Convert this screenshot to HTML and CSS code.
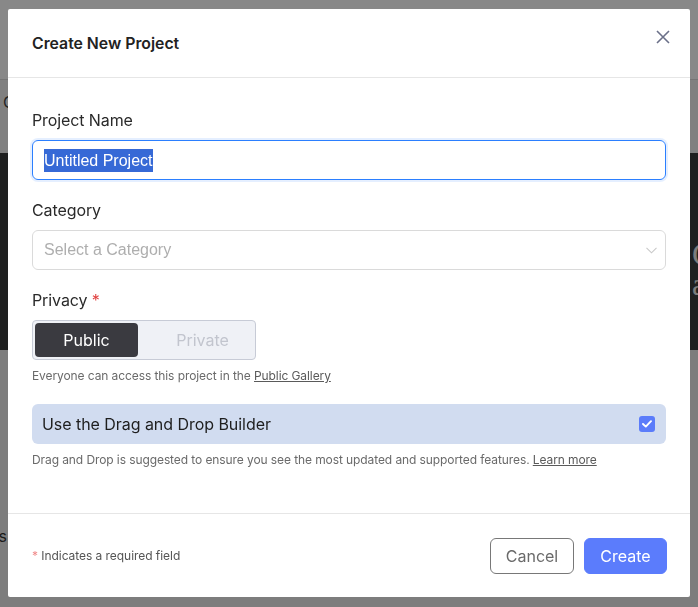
FILE: index.html
```html
<!DOCTYPE html>
<html lang="en">
<head>
<meta charset="utf-8">
<title>Create New Project</title>
<link rel="stylesheet" href="styles.css">
</head>
<body>
<div class="page">
  <div class="page-header"></div>
  <div class="page-subnav">Community</div>
  <div class="page-hero"><h1 class="hero-title">Create amazing</h1></div>
  <div class="page-content">Browse Site Templates</div>
</div>

<div class="overlay">
  <div class="modal" role="dialog" aria-labelledby="modal-title">
    <div class="modal-header">
      <h2 class="modal-title" id="modal-title">Create New Project</h2>
      <button class="close-btn" aria-label="Close">
        <svg width="14" height="14" viewBox="0 0 14 14"><path d="M1 1L13 13M13 1L1 13" stroke="#6b7089" stroke-width="1.6" fill="none"/></svg>
      </button>
    </div>
    <div class="modal-body">
      <div class="field">
        <label class="label">Project Name</label>
        <div class="input focused"><span class="selected-text">Untitled Project</span></div>
      </div>
      <div class="field">
        <label class="label">Category</label>
        <div class="input select">
          <span class="placeholder">Select a Category</span>
          <svg class="chevron" width="11" height="7" viewBox="0 0 11 7"><path d="M0.5 0.8L5.5 5.8L10.5 0.8" stroke="#c9c9c9" stroke-width="1.1" fill="none"/></svg>
        </div>
      </div>
      <div class="field">
        <label class="label">Privacy <span class="req">*</span></label>
        <div class="toggle">
          <button class="toggle-btn active">Public</button>
          <button class="toggle-btn inactive">Private</button>
        </div>
        <p class="help">Everyone can access this project in the <a href="#" class="link">Public Gallery</a></p>
      </div>
      <div class="field dnd">
        <div class="dnd-box">
          <span>Use the Drag and Drop Builder</span>
          <span class="checkbox">
            <svg width="10" height="8" viewBox="0 0 10 8"><path d="M1 4L3.8 6.6L9 1.2" stroke="#fff" stroke-width="1.9" fill="none" stroke-linecap="round" stroke-linejoin="round"/></svg>
          </span>
        </div>
        <p class="help">Drag and Drop is suggested to ensure you see the most updated and supported features. <a href="#" class="link">Learn more</a></p>
      </div>
    </div>
    <div class="modal-footer">
      <p class="footnote"><span class="req-light">*</span> Indicates a required field</p>
      <div class="actions">
        <button class="btn btn-cancel">Cancel</button>
        <button class="btn btn-create">Create</button>
      </div>
    </div>
  </div>
</div>
</body>
</html>
```
FILE: styles.css
```css
* { box-sizing: border-box; }
html, body { margin: 0; padding: 0; }
body {
  font-family: "Inter", "Liberation Sans", sans-serif;
  width: 698px;
  height: 607px;
  overflow: hidden;
  background: #e8e8e8;
}

/* background page */
.page {
  width: 698px;
  height: 607px;
  overflow: hidden;
  background: #ebebeb;
}
.page-header {
  height: 80px;
  background: #ffffff;
  border-bottom: 1px solid #dcdcdc;
}
.page-subnav {
  height: 73px;
  background: #f1f1f1;
  padding: 12px 0 0 3px;
  font-size: 16px;
  color: #444;
}
.page-hero {
  height: 197px;
  background: #3a3c3c;
  padding: 86px 0 0 692px;
  overflow: hidden;
}
.hero-title {
  margin: 0;
  font-family: "Liberation Serif", serif;
  font-weight: 400;
  font-size: 32px;
  line-height: 30px;
  color: #e8e8e8;
  width: 6px;
}
.page-content {
  padding: 176px 0 0 0;
  margin-left: -165px;
  font-size: 16px;
  color: #333;
}

/* overlay */
.overlay {
  position: fixed;
  inset: 0;
  background: rgba(0, 0, 0, 0.467);
  padding: 9px 8px 10px 8px;
  display: flex;
  align-items: flex-start;
  justify-content: center;
}
.modal {
  width: 682px;
  height: 588px;
  background: #ffffff;
  border-radius: 2px;
  display: flex;
  flex-direction: column;
}
.modal-header {
  height: 69px;
  border-bottom: 1px solid #e6e6e6;
  display: flex;
  align-items: center;
  justify-content: space-between;
  padding: 0 20px 0 24px;
}
.modal-title {
  margin: 0;
  font-size: 15.8px;
  font-weight: 600;
  color: #222;
}
.close-btn {
  border: 0;
  background: none;
  padding: 0;
  width: 14px;
  height: 14px;
  margin-top: -12px;
  display: flex;
  cursor: pointer;
}

.modal-body {
  flex: 1;
  padding: 30px 24px 0 24px;
}
.field { margin-bottom: 18px; }
.label {
  display: block;
  font-size: 16px;
  line-height: 24px;
  color: #2a2a2a;
  margin-bottom: 8px;
  letter-spacing: -0.1px;
}
.req { color: #e0403f; }
.req-light { color: #f08a8a; }

.input {
  height: 40px;
  border: 1px solid #dadada;
  border-radius: 6px;
  padding: 0 11px;
  display: flex;
  align-items: center;
  font-family: "Liberation Sans", Arial, sans-serif;
  font-size: 16px;
}
.input.focused {
  border-color: #2b7fff;
  box-shadow: 0 0 0 2px rgba(43, 127, 255, 0.12);
}
.selected-text {
  background: #3669d6;
  color: #ffffff;
  line-height: 23px;
}
.select { justify-content: space-between; padding-right: 8px; }
.placeholder { color: #aeaeae; }
.chevron { display: block; }

.toggle {
  display: inline-flex;
  width: 224px;
  height: 40px;
  background: #eff1f6;
  border: 1px solid #c7cbd6;
  border-radius: 4px;
  padding: 2px;
}
.toggle-btn {
  border: 0;
  font-family: "Inter", "Liberation Sans", sans-serif;
  font-size: 16px;
  border-radius: 4px;
  height: 34px;
  cursor: pointer;
}
.toggle-btn.active {
  width: 103px;
  background: #3a3a40;
  color: #ffffff;
}
.toggle-btn.inactive {
  flex: 1;
  background: transparent;
  color: #c2c5ce;
  padding: 0 0 0 14px;
}
.help {
  margin: 8px 0 0 0;
  font-size: 12px;
  line-height: 16px;
  color: #6a6a6a;
  letter-spacing: -0.09px;
}
.link { color: #5a5a5a; text-decoration: underline; }

.dnd { margin-top: 20px; }
.dnd-box {
  height: 40px;
  background: #d1dcf0;
  border-radius: 6px;
  display: flex;
  align-items: center;
  justify-content: space-between;
  padding: 0 10px;
  font-size: 16px;
  color: #1e1e1e;
  letter-spacing: -0.05px;
}
.checkbox {
  width: 16px;
  height: 16px;
  border-radius: 3px;
  background: #5b7cfa;
  display: flex;
  align-items: center;
  justify-content: center;
  margin-right: 1px;
}

.modal-footer {
  height: 84px;
  border-top: 1px solid #e6e6e6;
  display: flex;
  align-items: center;
  justify-content: space-between;
  padding: 0 23px 0 24px;
}
.footnote {
  margin: 0;
  font-size: 12px;
  color: #555;
  letter-spacing: -0.05px;
}
.actions { display: flex; gap: 10px; }
.btn {
  height: 36px;
  width: 84px;
  border-radius: 6px;
  font-family: "Inter", "Liberation Sans", sans-serif;
  font-size: 16px;
  cursor: pointer;
}
.btn-cancel {
  background: #fff;
  border: 1px solid #787878;
  color: #6a6a6a;
}
.btn-create {
  width: 83px;
  background: #5b7cfc;
  border: 1px solid #5b7cfc;
  color: #fff;
}
```
